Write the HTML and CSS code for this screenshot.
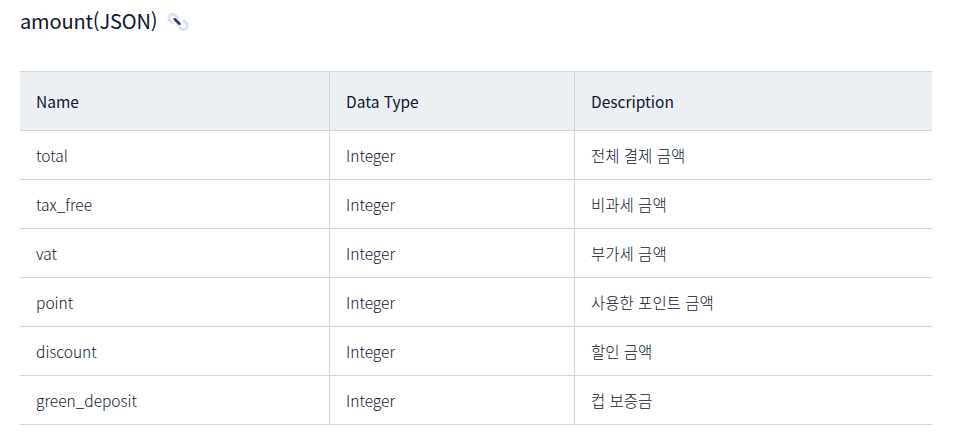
FILE: index.html
```html
<!DOCTYPE html>
<html lang="ko">
<head>
<meta charset="utf-8">
<title>amount(JSON)</title>
<link rel="stylesheet" href="styles.css">
</head>
<body>
<h3 class="title">amount(JSON)
<svg class="link-icon" viewBox="0 0 24 24" width="24" height="24" fill="none" stroke-linecap="round">
<path d="M10.6 7.6 8.3 5.3a3.9 3.9 0 0 0-5.5 5.5l2.3 2.3" stroke="#d9dff9" stroke-width="2.7" transform="translate(2 1)"/>
<path d="M13.4 16.4l2.3 2.3a3.9 3.9 0 0 0 5.5-5.5l-2.3-2.3" stroke="#d9dff9" stroke-width="2.7" transform="translate(0 1)"/>
<path d="M9.8 10.2l4.6 4.6" stroke="#343a6e" stroke-width="2.7"/>
</svg>
</h3>
<table class="spec">
<colgroup><col class="c1"><col class="c2"><col class="c3"></colgroup>
<thead><tr><th>Name</th><th>Data Type</th><th>Description</th></tr></thead>
<tbody>
<tr><td>total</td><td>Integer</td><td>전체 결제 금액</td></tr>
<tr><td>tax_free</td><td>Integer</td><td>비과세 금액</td></tr>
<tr><td>vat</td><td>Integer</td><td>부가세 금액</td></tr>
<tr><td>point</td><td>Integer</td><td>사용한 포인트 금액</td></tr>
<tr><td>discount</td><td>Integer</td><td>할인 금액</td></tr>
<tr><td>green_deposit</td><td>Integer</td><td>컵 보증금</td></tr>
</tbody>
</table>
</body>
</html>
```
FILE: styles.css
```css
html, body { margin: 0; padding: 0; background: #fff; }
body {
  padding: 0 26px 0 20px;
  font-family: "Noto Sans CJK KR", "Noto Sans", sans-serif;
  color: #0d1530;
}
.title {
  margin: 0 0 33px;
  height: 38px;
  display: flex;
  align-items: center;
  gap: 8px;
  font-size: 20px;
  letter-spacing: -0.16px;
  font-weight: 400;
  line-height: 38px;
  padding-top: 4px;
  box-sizing: border-box;
}
.link-icon { flex: none; margin-top: -1px; }
.spec {
  width: 912px;
  border-collapse: collapse;
  table-layout: fixed;
  font-size: 15.5px;
}
.c1 { width: 309.5px; }
.c2 { width: 245px; }
.spec th, .spec td {
  padding: 0 16px;
  text-align: left;
  border: 1px solid #d0d6dc;
  border-left: 0;
  border-right: 0;
}
.spec th + th, .spec td + td { border-left: 1px solid #d0d6dc; }
.spec th {
  height: 58px;
  background: #edf0f3;
  font-weight: 400;
}
.spec td {
  height: 48px;
  font-weight: 300;
  color: #0d1530;
}
```
